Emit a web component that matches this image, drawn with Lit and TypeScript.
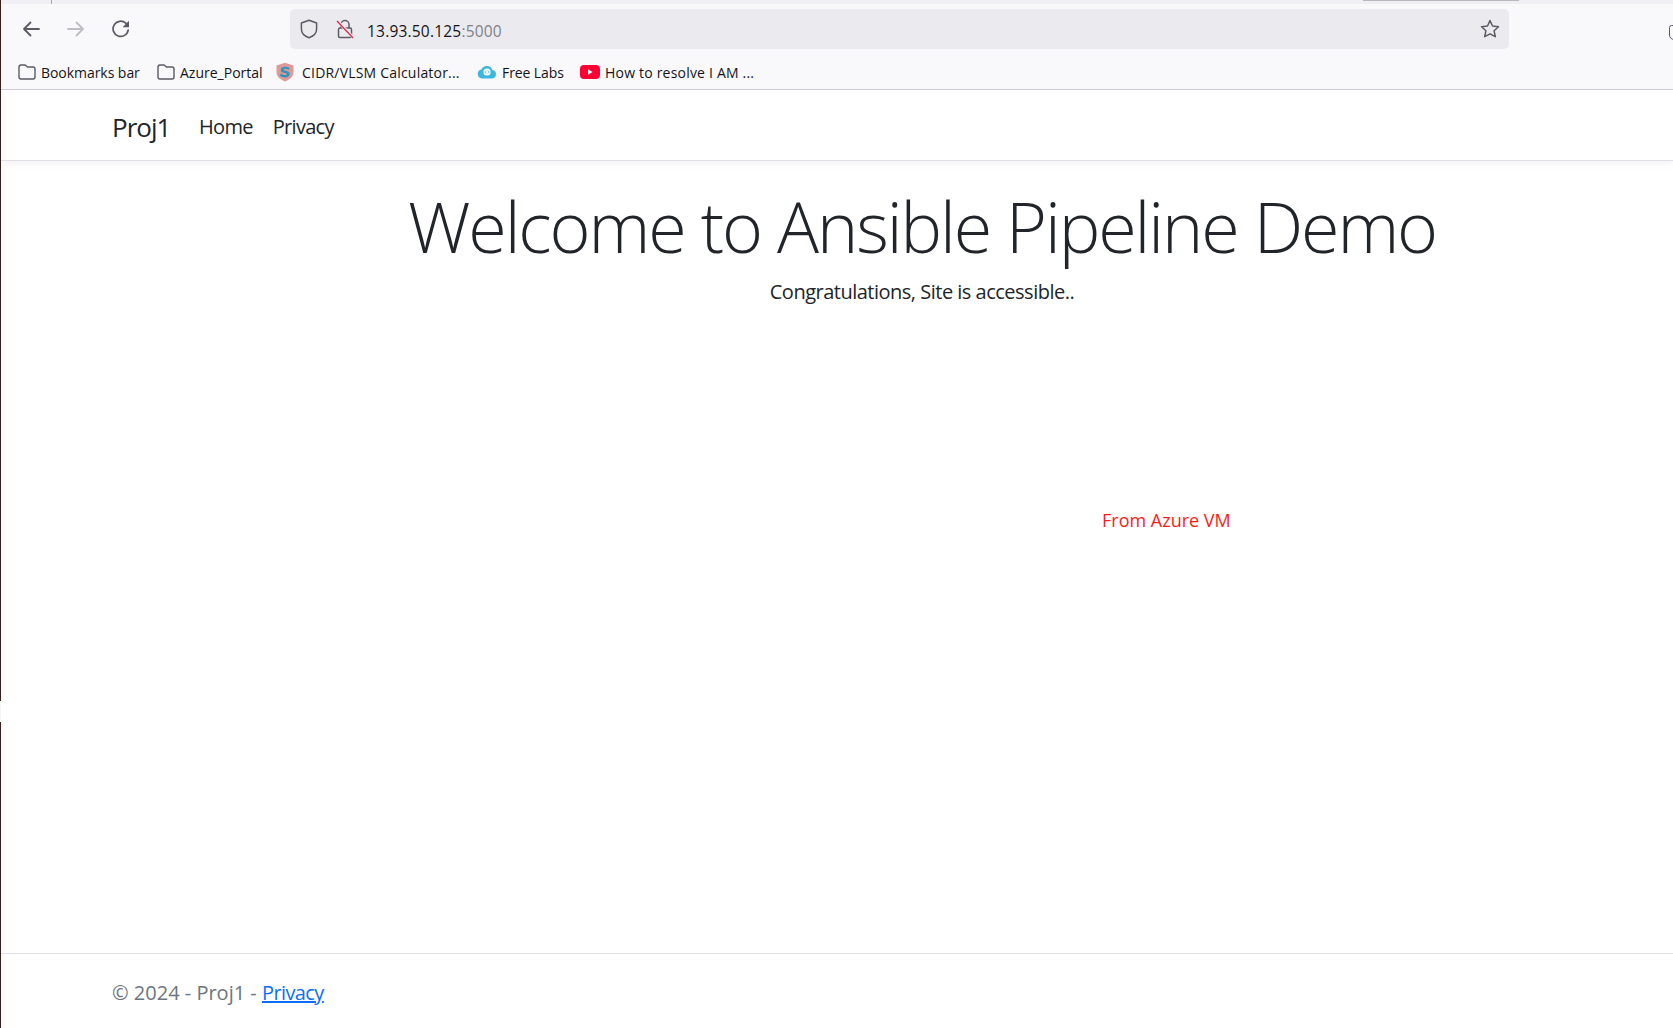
import { LitElement, html, css } from "lit";
import { customElement } from "lit/decorators.js";

const folder = html`<svg class="bm-icon" viewBox="0 0 18 16" width="18" height="16"><path d="M1 3.2C1 2 1.9 1 3 1h3.6c.6 0 1.1.3 1.5.7L9.5 3H15c1.1 0 2 .9 2 2v8c0 1.1-.9 2-2 2H3c-1.1 0-2-.9-2-2z" fill="none" stroke="#5b5b66" stroke-width="1.4"/></svg>`;

@customElement("app-root")
export class AppRoot extends LitElement {
  static styles = css`
    :host { display: flex; height: 1028px; width: 1673px; overflow: hidden; background: #fff; font-family: "Open Sans", "Noto Sans", sans-serif; color: #212529; position: relative; }
    .stripe { width: 1px; flex: none; display: flex; flex-direction: column; }
    .stripe .dark { background: #3d1c1c; }
    .stripe .d1 { height: 701px; }
    .stripe .gap { height: 21px; background: #f5f5f5; }
    .stripe .d2 { flex: 1; }
    .main { flex: 1; min-width: 0; display: flex; flex-direction: column; }
    .tabstrip { height: 4px; flex: none; background: #f0f0f4; position: relative; }
    .tabsep { position: absolute; left: 50px; top: 0; width: 1px; height: 4px; background: #a9a9b0; }
    .tabshadow { position: absolute; left: 1362px; top: 0; width: 156px; height: 1px; background: #b9b9bd; }
    .toolbar { height: 86px; flex: none; box-sizing: border-box; background: #f9f9fb; border-bottom: 1px solid #cfcfd8; display: flex; flex-direction: column; }
    .navrow { height: 50px; display: flex; align-items: center; flex: none; position: relative; }
    .navbtn { width: 18px; height: 18px; flex: none; }
    .back { margin-left: 21px; }
    .fwd { margin-left: 27px; }
    .reload { margin-left: 27px; }
    .urlbar { margin-left: 160px; width: 1219px; height: 40px; box-sizing: border-box; background: #ebebef; border-radius: 5px; display: flex; align-items: center; padding-left: 10px; }
    .shield { width: 18px; height: 20px; flex: none; }
    .lock { width: 18px; height: 20px; flex: none; margin-left: 18px; }
    .url { margin-left: 13px; padding-top: 3px; font-size: 15.5px; color: #15141a; letter-spacing: 0.2px; white-space: nowrap; }
    .url span { color: #808087; }
    .star { width: 20px; height: 20px; flex: none; margin-left: auto; margin-right: 9px; }
    .edge { position: absolute; left: 1668px; top: 21px; width: 10px; height: 15px; box-sizing: border-box; border: 1.5px solid #5b5b66; border-radius: 3px 3px 6px 6px; }
    .bookmarks { flex: 1; display: flex; align-items: center; padding-left: 17px; font-size: 14px; color: #15141a; white-space: nowrap; }
    .bm { display: flex; align-items: center; }
    .bm svg { flex: none; }
    .bm .t { margin-left: 5px; padding-top: 2px; }
    .bm1 { width: 139px; letter-spacing: -0.05px; }
    .bm2 { width: 119px; letter-spacing: 0; }
    .bm3 { width: 201px; letter-spacing: 0.2px; }
    .bm3 .t { margin-left: 8px; }
    .bm4 { width: 103px; letter-spacing: -0.1px; }
    .bm5 { letter-spacing: 0.2px; }
    .navbar { height: 71px; flex: none; box-sizing: border-box; background: #fff; border-bottom: 1px solid #dee2e6; box-shadow: 0 3px 8px rgba(0,0,0,.05); display: flex; align-items: center; padding-left: 111px; padding-top: 3px; color: #212529; position: relative; }
    .brand { font-size: 26px; letter-spacing: -1px; width: 87px; }
    .link { font-size: 20px; letter-spacing: -0.7px; margin-right: 20px; }
    .content { flex: 1; min-height: 0; display: flex; flex-direction: column; }
    .hero { margin-left: 406px; width: 1030px; text-align: center; padding-top: 23px; }
    h1 { margin: 0; font-size: 70px; font-weight: 300; line-height: 84px; letter-spacing: -2.1px; white-space: nowrap; }
    .sub { margin-top: 9px; font-size: 20px; line-height: 30px; letter-spacing: -0.5px; }
    .red { margin-left: 1101px; margin-top: 200px; color: #ff1a1a; font-size: 18px; line-height: 26px; white-space: nowrap; }
    footer { height: 75px; flex: none; box-sizing: border-box; border-top: 1px solid #dee2e6; padding-left: 111px; padding-top: 2px; display: flex; align-items: center; font-size: 20px; color: #6c757d; white-space: pre; }
    footer a { color: #0d6efd; text-decoration: underline; letter-spacing: -0.6px; }
  `;

  render() {
    return html`
      <div class="stripe"><div class="dark d1"></div><div class="gap"></div><div class="dark d2"></div></div>
      <div class="main">
        <div class="tabstrip"><div class="tabsep"></div><div class="tabshadow"></div></div>
        <div class="toolbar">
          <div class="navrow">
            <svg class="navbtn back" viewBox="0 0 18 18"><path d="M17 9H2M8.500 2.500 2 9l6.500 6.500" fill="none" stroke="#5b5b66" stroke-width="1.800" stroke-linecap="round" stroke-linejoin="round"/></svg>
            <svg class="navbtn fwd" viewBox="0 0 18 18"><path d="M1 9h15M9.500 2.500 16 9l-6.500 6.500" fill="none" stroke="#bdbdc2" stroke-width="1.800" stroke-linecap="round" stroke-linejoin="round"/></svg>
            <svg class="navbtn reload" viewBox="0 0 18 18"><path d="M16.200 10A7.600 7.600 0 1 1 13.800 3.200L16 6" fill="none" stroke="#5b5b66" stroke-width="1.700" stroke-linecap="round"/><path d="M17 .8v6.400h-6.400z" fill="#5b5b66"/></svg>
            <div class="urlbar">
              <svg class="shield" viewBox="0 0 18 20"><path d="M9 1.200 16.600 4v6c0 4-3.200 7.200-7.600 8.800C4.600 17.200 1.400 14 1.400 10V4z" fill="none" stroke="#5b5b66" stroke-width="1.500" stroke-linejoin="round"/></svg>
              <svg class="lock" viewBox="0 0 18 20"><path d="M5 9V5.500a4 4 0 0 1 8 0V9" fill="none" stroke="#5b5b66" stroke-width="1.500"/><rect x="2.500" y="9" width="13" height="9.500" rx="1.500" fill="none" stroke="#5b5b66" stroke-width="1.500"/><path d="M1 1.500 17 18.500" stroke="#ebebef" stroke-width="3"/><path d="M1 2 17 19" stroke="#e22850" stroke-width="1.300"/></svg>
              <div class="url">13.93.50.125<span>:5000</span></div>
              <svg class="star" viewBox="0 0 20 20"><path d="M10 1.500 12.500 7l6 .7-4.400 4.100 1.200 5.900L10 14.800l-5.300 2.900 1.200-5.900L1.500 7.700l6-.7z" fill="none" stroke="#5b5b66" stroke-width="1.500" stroke-linejoin="round"/></svg>
            </div>
            <div class="edge"></div>
          </div>
          <div class="bookmarks">
            <div class="bm bm1">${folder}<span class="t">Bookmarks bar</span></div>
            <div class="bm bm2">${folder}<span class="t">Azure_Portal</span></div>
            <div class="bm bm3"><svg viewBox="0 0 18 20" width="18" height="20"><path d="M9 .8 17.500 3.500V10c0 4.500-3.500 7.500-8.500 9.500C4 17.500.5 14.500.5 10V3.500z" fill="#dc9a98"/><path d="M13.500 6.200C12.500 5.200 11 4.700 9.200 4.700 6.600 4.700 4.800 5.900 4.800 7.900c0 3.700 6 2.300 6 4.100 0 .7-.8 1.100-2 1.100-1.500 0-2.900-.6-3.900-1.500l-1 2.200c1.200 1 3 1.600 4.900 1.600 2.800 0 4.900-1.200 4.900-3.500 0-3.800-6-2.500-6-4.200 0-.6.700-1 1.700-1 1.200 0 2.300.4 3.100 1z" fill="#2f93bd"/></svg><span class="t">CIDR/VLSM Calculator...</span></div>
            <div class="bm bm4"><svg viewBox="0 0 20 14" width="20" height="14"><path d="M5 13.500a4.500 4.500 0 0 1-.6-8.900A5.800 5.800 0 0 1 15.300 5a4.300 4.300 0 0 1 0 8.500z" fill="#3cb7dd"/><circle cx="10" cy="7" r="3.600" fill="#fff"/><path d="M9 5.500 7.800 7 9 8.500M11 5.500 12.200 7 11 8.500" fill="none" stroke="#3cb7dd" stroke-width=".8"/></svg><span class="t">Free Labs</span></div>
            <div class="bm bm5"><svg viewBox="0 0 20 14" width="20" height="14"><rect width="20" height="14" rx="4" fill="#ff0033"/><path d="M8 4.300v5.400L12.500 7z" fill="#fff"/></svg><span class="t">How to resolve I AM ...</span></div>
          </div>
        </div>
        <div class="navbar">
          <span class="brand">Proj1</span>
          <span class="link">Home</span>
          <span class="link">Privacy</span>
        </div>
        <div class="content">
          <div class="hero">
            <h1>Welcome to Ansible Pipeline Demo</h1>
            <div class="sub">Congratulations, Site is accessible..</div>
          </div>
          <div class="red">From Azure VM</div>
        </div>
        <footer>© 2024 - Proj1 - <a href="#">Privacy</a></footer>
      </div>
    `;
  }
}
